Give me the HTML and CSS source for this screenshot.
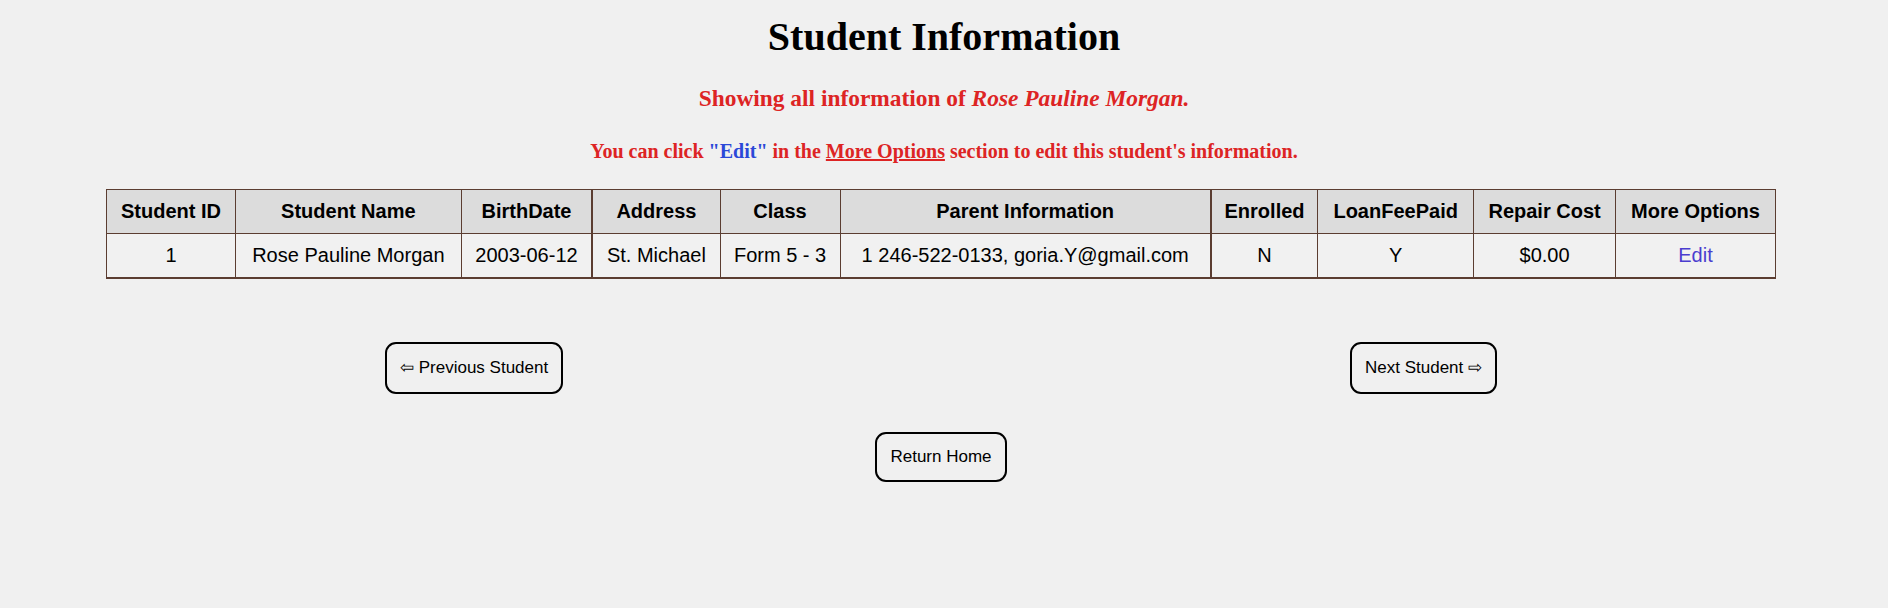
FILE: index.html
```html
<!DOCTYPE html>
<html lang="en">
<head>
<meta charset="utf-8">
<title>Student Information</title>
<link rel="stylesheet" href="styles.css">
</head>
<body>
  <h1 class="title">Student Information</h1>
  <h2 class="subtitle">Showing all information of <em>Rose Pauline Morgan.</em></h2>
  <h3 class="hint">You can click <span class="hint-edit">"Edit"</span> in the <u>More Options</u> section to edit this student's information.</h3>

  <table class="info">
    <colgroup>
      <col class="c1"><col class="c2"><col class="c3"><col class="c4"><col class="c5">
      <col class="c6"><col class="c7"><col class="c8"><col class="c9"><col class="c10">
    </colgroup>
    <thead>
      <tr>
        <th>Student ID</th>
        <th>Student Name</th>
        <th class="thick">BirthDate</th>
        <th>Address</th>
        <th>Class</th>
        <th class="thick">Parent Information</th>
        <th>Enrolled</th>
        <th>LoanFeePaid</th>
        <th>Repair Cost</th>
        <th>More Options</th>
      </tr>
    </thead>
    <tbody>
      <tr>
        <td>1</td>
        <td>Rose Pauline Morgan</td>
        <td class="thick">2003-06-12</td>
        <td>St. Michael</td>
        <td>Form 5 - 3</td>
        <td class="thick">1 246-522-0133, goria.Y@gmail.com</td>
        <td>N</td>
        <td>Y</td>
        <td>$0.00</td>
        <td><a class="edit" href="#">Edit</a></td>
      </tr>
    </tbody>
  </table>

  <div class="nav">
    <button class="btn">&#8678; Previous Student</button>
    <button class="btn">Next Student &#8680;</button>
  </div>
  <div class="home">
    <button class="btn btn-home">Return Home</button>
  </div>
</body>
</html>
```

FILE: styles.css
```css
html, body {
  margin: 0;
  padding: 0;
  background: #f0f0f0;
}

body {
  font-family: "Liberation Serif", "Times New Roman", serif;
  color: #000;
}

.title {
  margin: 15px 0 0;
  font-size: 40px;
  line-height: 44px;
  font-weight: bold;
  text-align: center;
}

.subtitle {
  margin: 26px 0 0;
  font-size: 23.4px;
  line-height: 27px;
  font-weight: bold;
  color: #dd2424;
  text-align: center;
}

.subtitle em {
  font-style: italic;
}

.hint {
  margin: 28px 0 0;
  font-size: 20px;
  line-height: 22px;
  font-weight: bold;
  color: #dd2424;
  text-align: center;
}

.hint-edit {
  color: #2b48d8;
}

.hint u {
  text-decoration: underline;
}

.info {
  margin: 27px 0 0 106px;
  width: 1670px;
  border-collapse: collapse;
  font-family: "Liberation Sans", Arial, sans-serif;
  font-size: 20px;
  line-height: 23px;
  border: 1px solid #5b3d31;
  border-bottom-width: 2px;
}

.c1 { width: 129px; }
.c2 { width: 226px; }
.c3 { width: 131px; }
.c4 { width: 128px; }
.c5 { width: 120px; }
.c6 { width: 371px; }
.c7 { width: 107px; }
.c8 { width: 156px; }
.c9 { width: 142px; }
.c10 { width: 160px; }

.info th,
.info td {
  border: 1px solid #5b3d31;
  padding: 10px 4px;
  text-align: center;
  white-space: nowrap;
}

.info th {
  background: #dcdcdc;
  font-weight: bold;
}

.info td {
  background: #f1f1f1;
}

.info tbody tr td {
  border-bottom: 2px solid #5b3d31;
}

.info .thick {
  border-right: 2px solid #5b3d31;
}

.edit {
  color: #4a3dcf;
  text-decoration: none;
}

.nav {
  display: flex;
  justify-content: space-between;
  margin-top: 63px;
  padding: 0 391px 0 385px;
}

.home {
  display: flex;
  justify-content: center;
  margin-top: 38px;
  padding-right: 6px;
}

.btn {
  font-family: "Liberation Sans", Arial, sans-serif;
  font-size: 17px;
  line-height: 18px;
  color: #000;
  background: #f0f0f0;
  border: 2px solid #000;
  border-radius: 11px;
  padding: 15px 13px;
  margin: 0;
  cursor: pointer;
}

.btn-home {
  padding: 14px 13px;
}
```
